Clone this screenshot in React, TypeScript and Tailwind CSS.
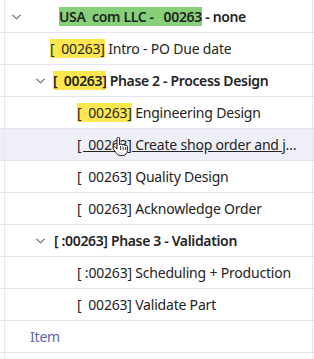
import React from "react";

type Row = {
  pad: string;
  chevron?: string;
  bold?: boolean;
  mark?: string;
  markColor?: string;
  text: string;
  hover?: boolean;
};

const rows: Row[] = [
  { pad: "pl-[12px]", chevron: "mr-[38px]", bold: true, mark: "USA  com LLC -   00263", markColor: "bg-[#86d079]", text: " - none" },
  { pad: "pl-[50px]", mark: "[  00263]", markColor: "bg-[#fce74e]", text: " Intro - PO Due date" },
  { pad: "pl-[36px]", chevron: "mr-[8px]", bold: true, mark: "[  00263]", markColor: "bg-[#fce74e]", text: " Phase 2 - Process Design" },
  { pad: "pl-[77px]", mark: "[  00263]", markColor: "bg-[#fce74e]", text: " Engineering Design" },
  { pad: "pl-[77px]", text: "[  00263] Create shop order and job", hover: true },
  { pad: "pl-[77px]", text: "[  00263] Quality Design" },
  { pad: "pl-[77px]", text: "[  00263] Acknowledge Order" },
  { pad: "pl-[36px]", chevron: "mr-[9px]", bold: true, text: "[ :00263] Phase 3 - Validation" },
  { pad: "pl-[77px]", text: "[ :00263] Scheduling + Production" },
  { pad: "pl-[77px]", text: "[  00263] Validate Part" },
];

function Chevron({ className }: { className: string }) {
  return (
    <svg width="9" height="6" viewBox="0 0 9 6" className={`shrink-0 text-[#616161] ${className}`}>
      <path d="M0.5 0.8 L4.5 4.8 L8.5 0.8" fill="none" stroke="currentColor" strokeWidth="1.1" />
    </svg>
  );
}

function HandCursor() {
  return (
    <svg width="18" height="20" viewBox="0 0 18 20" className="absolute left-[112px] top-[137px]">
      <path
        d="M5 1.5c0-.8.6-1.4 1.3-1.4s1.3.6 1.3 1.4v6.2c.3-.6.9-.9 1.5-.8.7.1 1.1.6 1.2 1.2.3-.5.9-.8 1.5-.7.7.1 1.1.7 1.1 1.3.3-.4.9-.6 1.4-.5.7.2 1.1.8 1.1 1.5v3.8c0 2.9-2 5-4.9 5H8.3c-1.6 0-2.9-.8-3.8-2.1L1.3 12c-.4-.7-.2-1.5.4-1.9.6-.4 1.4-.3 1.9.3L5 12.1V1.5z"
        fill="#fff"
        stroke="#000"
        strokeWidth="0.9"
      />
      <path d="M8.6 9v4M11.1 9.5v3.5M13.6 10v3" stroke="#000" strokeWidth="0.8" />
    </svg>
  );
}

export default function App() {
  return (
    <div
      className="relative w-[314px] h-[359px] bg-white overflow-hidden text-[14px] text-[#242424]"
      style={{ fontFamily: '"Segoe UI", "Noto Sans", "Open Sans", sans-serif' }}
    >
      <div className="absolute left-[4px] top-0 bottom-0 w-px bg-[#e6e6ef]" />
      <div className="absolute left-[312px] top-0 bottom-0 w-px bg-[#e6e6ef]" />
      <div className="flex flex-col pt-px">
        {rows.map((r, i) => (
          <div
            key={i}
            className={`flex items-center h-8 border-b border-[#e6e6ef] pr-[13px] ${r.pad} ${r.hover ? "bg-[#eff0f7]" : ""}`}
          >
            {r.chevron && <Chevron className={r.chevron} />}
            <span
              className={`min-w-0 whitespace-pre overflow-hidden text-ellipsis leading-[22px] ${r.bold ? "font-semibold tracking-[-0.35px]" : "tracking-[-0.2px]"} ${r.hover ? "underline" : ""}`}
            >
              {r.mark && <span className={r.markColor}>{r.mark}</span>}
              {r.text}
            </span>
          </div>
        ))}
        <div className="flex items-center h-8 border-b border-[#e6e6ef] pl-[30px] text-[#6264a7] tracking-[-0.2px]">Item</div>
      </div>
      <HandCursor />
    </div>
  );
}
